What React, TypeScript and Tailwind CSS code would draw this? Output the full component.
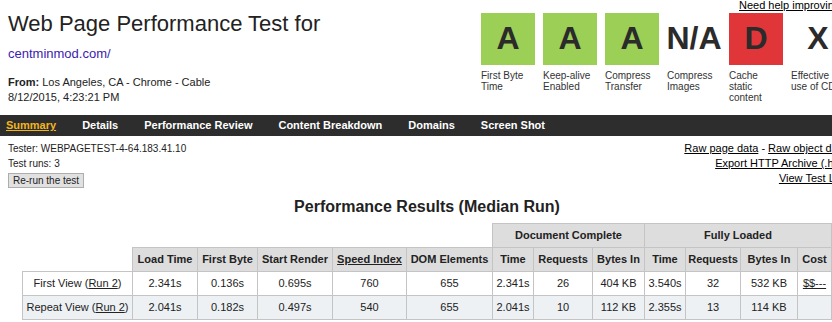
import React from 'react';

type Grade = {
  letter: string;
  box: string;
  label: string[];
};

const grades: Grade[] = [
  { letter: 'A', box: 'bg-[#9bcf55]', label: ['First Byte', 'Time'] },
  { letter: 'A', box: 'bg-[#9bcf55]', label: ['Keep-alive', 'Enabled'] },
  { letter: 'A', box: 'bg-[#9bcf55]', label: ['Compress', 'Transfer'] },
  { letter: 'N/A', box: '', label: ['Compress', 'Images'] },
  { letter: 'D', box: 'bg-[#e0363a]', label: ['Cache', 'static', 'content'] },
  { letter: 'X', box: '', label: ['Effective', 'use of CDN'] },
];

const tabs = [
  'Summary',
  'Details',
  'Performance Review',
  'Content Breakdown',
  'Domains',
  'Screen Shot',
];

// column widths measured off the reference, borders included
const colWidths = [110, 65, 60, 75, 74, 86, 41, 59, 52, 41, 55, 57, 34];

const headers = [
  'Load Time',
  'First Byte',
  'Start Render',
  'Speed Index',
  'DOM Elements',
  'Time',
  'Requests',
  'Bytes In',
  'Time',
  'Requests',
  'Bytes In',
  'Cost',
];

type Run = {
  view: string;
  cells: string[];
  cost?: string;
  shaded?: boolean;
};

const runs: Run[] = [
  {
    view: 'First View',
    cells: ['2.341s', '0.136s', '0.695s', '760', '655', '2.341s', '26', '404 KB', '3.540s', '32', '532 KB'],
    cost: '$$---',
  },
  {
    view: 'Repeat View',
    cells: ['2.041s', '0.182s', '0.497s', '540', '655', '2.041s', '10', '112 KB', '2.355s', '13', '114 KB'],
    shaded: true,
  },
];

function Header() {
  return (
    <div className="flex items-start px-[8px]">
      <div className="w-[473px]">
        <h1 className="mt-[11px] text-[22px] leading-[26px] text-[#222]">
          Web Page Performance Test for
        </h1>
        <a className="mt-[9px] block text-[13px] leading-[16px] text-[#3a22b0]">
          centminmod.com/
        </a>
        <div className="mt-[13px] text-[11px] leading-[15px] text-[#222]">
          <div>
            <span className="font-bold">From:</span> Los Angeles, CA - Chrome - Cable
          </div>
          <div>8/12/2015, 4:23:21 PM</div>
        </div>
      </div>
      <div className="flex-1">
        <div className="-mt-[1px] text-right text-[11px] leading-[12px]">
          <a className="text-black underline">Need help improving?</a>
        </div>
        <div className="mt-[2px] flex gap-[8px]">
          {grades.map((g, i) => (
            <div key={i} className="w-[54px] shrink-0">
              <div
                className={`flex h-[52px] w-[54px] items-center justify-center pb-[3px] text-[32px] font-bold leading-none text-[#2b2b2b] ${g.box}`}
              >
                {g.letter}
              </div>
              <div className="mt-[5px] whitespace-nowrap text-[10px] leading-[11px] text-[#333]">
                {g.label.map((l) => (
                  <div key={l}>{l}</div>
                ))}
              </div>
            </div>
          ))}
        </div>
      </div>
    </div>
  );
}

function NavBar() {
  return (
    <div className="mt-[10px] flex h-[21px] gap-[26px] bg-[#2d2d2d] pl-[6px] text-[11px] font-bold leading-[21px]">
      {tabs.map((t, i) =>
        i === 0 ? (
          <a key={t} className="text-[#f2b51e] underline">
            {t}
          </a>
        ) : (
          <a key={t} className="text-white">
            {t}
          </a>
        ),
      )}
    </div>
  );
}

function TestInfo() {
  return (
    <div className="flex items-start justify-between pl-[8px] pr-[7px] pt-[5px]">
      <div className="text-[10px] leading-[15px] text-[#222]">
        <div>Tester: WEBPAGETEST-4-64.183.41.10</div>
        <div>Test runs: 3</div>
        <button className="mt-[2px] h-[15px] border border-[#adadad] bg-[#e1e1e1] px-[4px] text-[10px] leading-[13px] text-[#222]">
          Re-run the test
        </button>
      </div>
      <div className="text-right text-[11px] leading-[15px] text-black">
        <div>
          <a className="underline">Raw page data</a> - <a className="underline">Raw object data</a>
        </div>
        <div>
          <a className="underline">Export HTTP Archive (.har)</a>
        </div>
        <div>
          <a className="underline">View Test Log</a>
        </div>
      </div>
    </div>
  );
}

function ResultsTable() {
  const th = 'h-[24px] border border-[#c4c4c4] bg-[#dddddd] p-0 text-center text-[11px] font-bold text-[#222]';
  const td = 'h-[24px] border border-[#c4c4c4] p-0 text-center text-[11px] text-[#222]';
  return (
    <div>
      <h2 className="mt-[9px] text-center text-[16px] font-bold leading-[20px] text-[#222]">
        Performance Results (Median Run)
      </h2>
      <table className="mx-auto mt-[6px] table-fixed border-collapse">
        <colgroup>
          {colWidths.map((w, i) => (
            <col key={i} style={{ width: w }} />
          ))}
        </colgroup>
        <thead>
          <tr>
            <th colSpan={6} className="h-[24px] p-0" />
            <th colSpan={3} className={th}>
              Document Complete
            </th>
            <th colSpan={4} className={th}>
              Fully Loaded
            </th>
          </tr>
          <tr>
            <th className="h-[24px] p-0" />
            {headers.map((h, i) => (
              <th key={i} className={th}>
                {h === 'Speed Index' ? <a className="underline">{h}</a> : h}
              </th>
            ))}
          </tr>
        </thead>
        <tbody>
          {runs.map((r) => (
            <tr key={r.view} className={r.shaded ? 'bg-[#edf1f4]' : 'bg-white'}>
              <td className={td}>
                {r.view} (<a className="underline">Run 2</a>)
              </td>
              {r.cells.map((c, i) => (
                <td key={i} className={td}>
                  {c}
                </td>
              ))}
              <td className={td}>{r.cost && <a className="underline">{r.cost}</a>}</td>
            </tr>
          ))}
        </tbody>
      </table>
    </div>
  );
}

export default function App() {
  return (
    <div className="h-[322px] w-[832px] overflow-hidden bg-white font-['Liberation_Sans',Arial,sans-serif]">
      <div className="w-[854px]">
        <Header />
        <NavBar />
        <TestInfo />
        <ResultsTable />
      </div>
    </div>
  );
}
